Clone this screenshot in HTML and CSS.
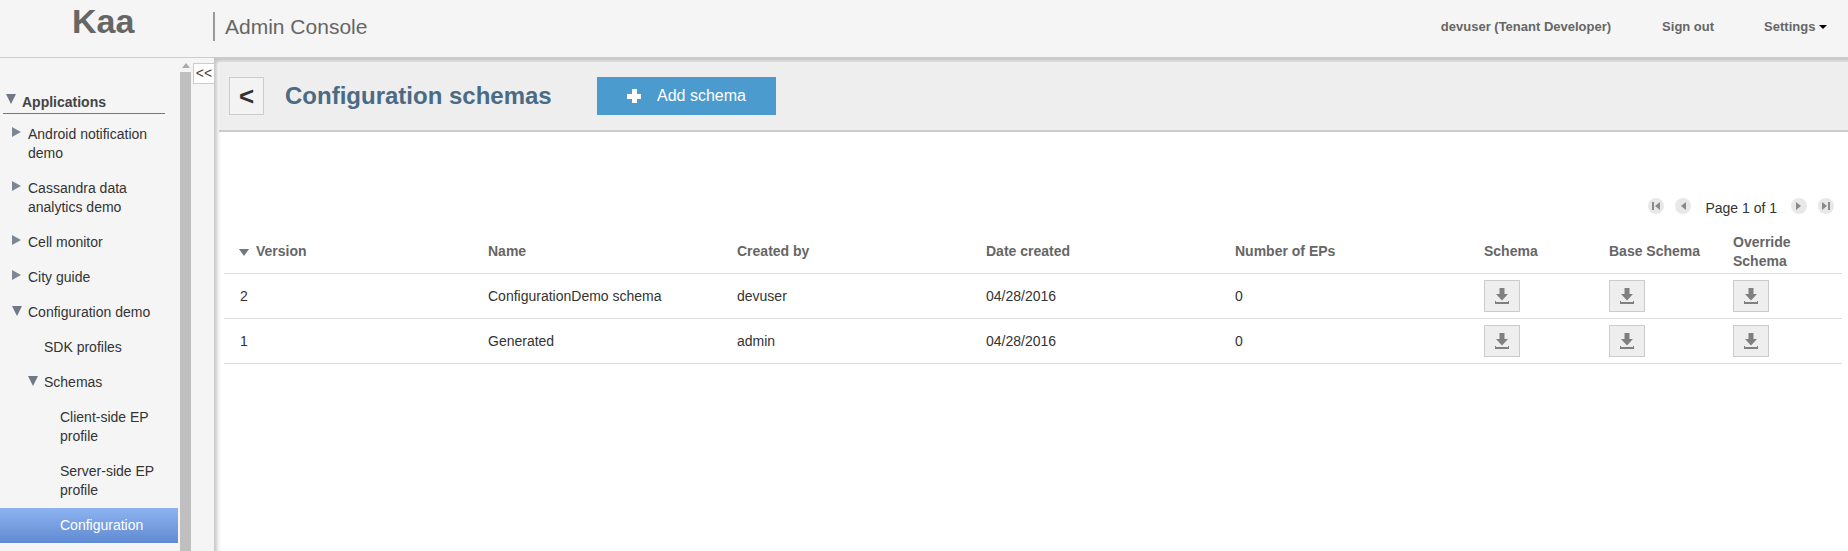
FILE: index.html
```html
<!DOCTYPE html>
<html lang="en">
<head>
    <meta charset="UTF-8">
    <title>Kaa Admin Console</title>
    <link rel="stylesheet" href="styles.css">
</head>
<body>
    <svg class="defs">
        <symbol id="download" viewBox="0 0 14 16">
            <path d="M4.500 0h5v6H13l-6 6.500L1 6h3.500z"/>
            <path d="M0 14h14v2.500H0z"/>
            <path d="M0 13h1v2H0zM13 13h1v2h-1z"/>
        </symbol>
    </svg>

    <header class="topbar">
        <div class="logo">Kaa</div>
        <div class="console-title">Admin Console</div>
        <nav class="top-links">
            <span class="user-link">devuser (Tenant Developer)</span>
            <span class="signout-link">Sign out</span>
            <span class="settings-link">Settings <i class="caret"></i></span>
        </nav>
    </header>

    <div class="workspace">
        <aside class="sidebar">
            <div class="tree">
                <div class="tree-head"><i class="tri-down"></i>Applications</div>
                <div class="tree-item lvl1"><i class="tri-right"></i>Android notification demo</div>
                <div class="tree-item lvl1"><i class="tri-right"></i>Cassandra data analytics demo</div>
                <div class="tree-item lvl1"><i class="tri-right"></i>Cell monitor</div>
                <div class="tree-item lvl1"><i class="tri-right"></i>City guide</div>
                <div class="tree-item lvl1"><i class="tri-down"></i>Configuration demo</div>
                <div class="tree-item lvl2">SDK profiles</div>
                <div class="tree-item lvl2"><i class="tri-down"></i>Schemas</div>
                <div class="tree-item lvl3">Client-side EP profile</div>
                <div class="tree-item lvl3">Server-side EP profile</div>
                <div class="tree-item lvl3 selected">Configuration</div>
            </div>
            <div class="scrollbar">
                <div class="scroll-up"></div>
                <div class="scroll-thumb"></div>
            </div>
        </aside>

        <div class="splitter">
            <div class="collapse-btn">&lt;&lt;</div>
        </div>

        <main class="content">
            <div class="title-bar">
                <button class="back-btn">&lt;</button>
                <h1 class="page-title">Configuration schemas</h1>
                <button class="add-btn"><span class="plus"></span>Add schema</button>
            </div>

            <div class="pager">
                <span class="pager-btn"><svg width="8" height="8" viewBox="0 0 8 8"><path d="M0 0h2v8H0zM8 0v8L3 4z"/></svg></span>
                <span class="pager-btn"><svg width="6" height="8" viewBox="0 0 6 8"><path d="M6 0v8L1 4z"/></svg></span>
                <span class="pager-text">Page 1 of 1</span>
                <span class="pager-btn"><svg width="6" height="8" viewBox="0 0 6 8"><path d="M0 0v8l5-4z"/></svg></span>
                <span class="pager-btn"><svg width="8" height="8" viewBox="0 0 8 8"><path d="M0 0v8l5-4zM6 0h2v8H6z"/></svg></span>
            </div>

            <table class="schema-table">
                <thead>
                    <tr>
                        <th class="col-first"><i class="sort-down"></i>Version</th>
                        <th class="col-wide">Name</th>
                        <th class="col-wide">Created by</th>
                        <th class="col-wide">Date created</th>
                        <th class="col-wide">Number of EPs</th>
                        <th class="col-btn">Schema</th>
                        <th class="col-base">Base Schema</th>
                        <th class="col-btn">Override Schema</th>
                    </tr>
                </thead>
                <tbody>
                    <tr>
                        <td>2</td>
                        <td>ConfigurationDemo schema</td>
                        <td>devuser</td>
                        <td>04/28/2016</td>
                        <td>0</td>
                        <td><button class="dl-btn"><svg width="14" height="16"><use href="#download"/></svg></button></td>
                        <td><button class="dl-btn"><svg width="14" height="16"><use href="#download"/></svg></button></td>
                        <td><button class="dl-btn"><svg width="14" height="16"><use href="#download"/></svg></button></td>
                    </tr>
                    <tr>
                        <td>1</td>
                        <td>Generated</td>
                        <td>admin</td>
                        <td>04/28/2016</td>
                        <td>0</td>
                        <td><button class="dl-btn"><svg width="14" height="16"><use href="#download"/></svg></button></td>
                        <td><button class="dl-btn"><svg width="14" height="16"><use href="#download"/></svg></button></td>
                        <td><button class="dl-btn"><svg width="14" height="16"><use href="#download"/></svg></button></td>
                    </tr>
                </tbody>
            </table>
        </main>
    </div>
</body>
</html>
```

FILE: styles.css
```css
html, body {
    margin: 0;
    height: 100%;
    overflow: hidden;
}
body {
    font-family: "Liberation Sans", Arial, sans-serif;
    font-size: 14px;
    color: #333;
    background-color: #f5f5f5;
    display: flex;
    flex-direction: column;
}
.defs {
    display: none;
}

/* top bar */
.topbar {
    flex: none;
    height: 57px;
    border-bottom: 1px solid #ccc;
    display: flex;
    align-items: flex-start;
    color: #666;
}
.logo {
    width: 213px;
    padding-left: 72px;
    box-sizing: border-box;
    font-size: 34px;
    font-weight: bold;
    line-height: 43px;
}
.console-title {
    margin-top: 12px;
    height: 29px;
    border-left: 2px solid #999;
    padding-left: 10px;
    font-size: 21px;
    line-height: 30px;
}
.top-links {
    margin-left: auto;
    display: flex;
    padding-top: 18px;
    font-size: 13px;
    font-weight: bold;
    line-height: 17px;
}
.user-link {
    margin-right: 51px;
}
.signout-link {
    margin-right: 50px;
}
.settings-link {
    margin-right: 21px;
}
.caret {
    display: inline-block;
    border-top: 4px solid #000;
    border-left: 4px solid transparent;
    border-right: 4px solid transparent;
    vertical-align: 2px;
}

/* left tree */
.workspace {
    flex: 1;
    display: flex;
    min-height: 0;
}
.sidebar {
    flex: none;
    width: 191px;
    display: flex;
    overflow: hidden;
}
.tree {
    width: 178px;
    padding-top: 35px;
}
.tree-head {
    margin: 0 13px 3px 3px;
    height: 20px;
    padding-left: 19px;
    border-bottom: 1px solid #777;
    font-weight: bold;
    line-height: 18px;
    color: #444;
    position: relative;
}
.tree-item {
    position: relative;
    padding-top: 8px;
    padding-bottom: 8px;
    padding-right: 10px;
    line-height: 19px;
    color: #333;
}
.lvl1 {
    padding-left: 28px;
}
.lvl2 {
    padding-left: 44px;
}
.lvl3 {
    padding-left: 60px;
}
.selected {
    color: #fff;
    background: linear-gradient(#8db4f0, #608ad2);
}
.tri-right, .tri-down {
    position: absolute;
    width: 0;
    height: 0;
}
.tri-right {
    top: 10px;
    left: 12px;
    border-left: 9px solid #7c8796;
    border-top: 5px solid transparent;
    border-bottom: 5px solid transparent;
}
.tri-down {
    top: 11px;
    left: 12px;
    border-top: 10px solid #6f7887;
    border-left: 5px solid transparent;
    border-right: 5px solid transparent;
}
.lvl2 .tri-down {
    left: 28px;
}
.tree-head .tri-down {
    top: 1px;
    left: 3px;
    border-top-width: 10px;
}
.scrollbar {
    width: 11px;
    margin-left: 2px;
    background-color: #f5f5f5;
}
.scroll-up {
    margin: 5px auto 4px;
    width: 0;
    border-bottom: 5px solid #aaa;
    border-left: 4px solid transparent;
    border-right: 4px solid transparent;
}
.scroll-thumb {
    width: 11px;
    height: 500px;
    background-color: #bfbfbf;
}

/* splitter */
.splitter {
    flex: none;
    width: 23px;
    padding: 5px 0 0 2px;
    box-sizing: border-box;
    background-color: #f5f5f5;
}
.collapse-btn {
    height: 19px;
    border: 1px solid #ccc;
    border-right: none;
    background-color: #fff;
    font-size: 14px;
    line-height: 19px;
    text-align: center;
    color: #444;
}

/* main area */
.content {
    flex: 1;
    min-width: 0;
    background: linear-gradient(#eee 4px, #fff 4px);
    box-shadow: inset 4px 4px 4px -1px #c4c4c4;
    padding: 4px 0 0 5px;
}
.title-bar {
    display: flex;
    align-items: center;
    height: 68px;
    background-color: #eee;
    border-bottom: 2px solid #ccc;
    padding-left: 10px;
}
.back-btn {
    width: 35px;
    height: 38px;
    border: 1px solid #ccc;
    background-color: #f3f3f3;
    padding: 0;
    font-family: inherit;
    font-size: 26px;
    font-weight: bold;
    color: #333;
}
.page-title {
    margin: 0 0 0 21px;
    width: 312px;
    font-size: 24px;
    color: #4a6a85;
}
.add-btn {
    width: 179px;
    height: 38px;
    border: none;
    background-color: #4b9bce;
    color: #fff;
    font-family: inherit;
    font-size: 16px;
    padding: 0 0 0 30px;
    text-align: left;
    display: flex;
    align-items: center;
}
.plus {
    width: 14px;
    height: 14px;
    margin-right: 16px;
    background:
        linear-gradient(#fff, #fff) center / 5px 14px no-repeat,
        linear-gradient(#fff, #fff) center / 14px 5px no-repeat;
}

/* pager */
.pager {
    display: flex;
    justify-content: flex-end;
    align-items: center;
    height: 18px;
    margin-top: 65px;
    margin-bottom: 10px;
    padding-right: 14px;
    gap: 11px;
}
.pager-btn {
    width: 16px;
    height: 16px;
    border-radius: 50%;
    background-color: #e8e8e8;
    display: flex;
    align-items: center;
    justify-content: center;
    fill: #8a8a8a;
}
.pager-text {
    margin: 0 3px;
    font-size: 14px;
    position: relative;
    top: 2px;
}

/* table */
.schema-table {
    margin: 0 0 0 5px;
    width: 1618px;
    border-collapse: collapse;
    table-layout: fixed;
}
.schema-table th {
    height: 48px;
    padding: 6px 8px 0 16px;
    box-sizing: border-box;
    border-bottom: 1px solid #ddd;
    font-size: 14px;
    line-height: 19px;
    text-align: left;
    color: #666;
    position: relative;
}
.schema-table td {
    height: 45px;
    padding: 0 8px 0 16px;
    box-sizing: border-box;
    border-bottom: 1px solid #ddd;
    color: #333;
}
.col-first {
    width: 248px;
}
.col-wide {
    width: 249px;
}
.col-btn {
    width: 125px;
}
.col-base {
    width: 124px;
}
.schema-table th:first-child {
    padding-left: 32px;
}
.sort-down {
    position: absolute;
    left: 15px;
    top: 24px;
    border-top: 7px solid #6f7887;
    border-left: 5px solid transparent;
    border-right: 5px solid transparent;
}
.dl-btn {
    display: block;
    width: 36px;
    height: 32px;
    padding: 0;
    border: 1px solid #ccc;
    background-color: #eee;
    fill: #808080;
}
.dl-btn svg {
    display: block;
    margin: 0 auto;
}
```
